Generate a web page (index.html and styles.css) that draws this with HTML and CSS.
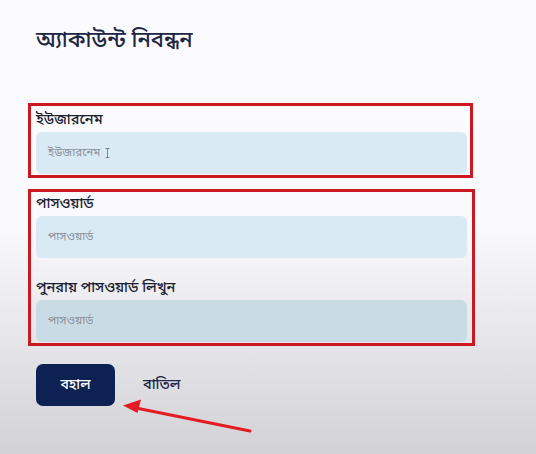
FILE: index.html
```html
<!DOCTYPE html>
<html lang="bn">
<head>
<meta charset="utf-8">
<title>অ্যাকাউন্ট নিবন্ধন</title>
<link rel="stylesheet" href="styles.css">
</head>
<body>
<main class="page">
  <h1 class="title">অ্যাকাউন্ট নিবন্ধন</h1>
  <form class="form">
    <div class="group group-user">
      <div class="field">
        <label class="label">ইউজারনেম</label>
        <div class="input"><span class="ph">ইউজারনেম</span><svg class="ibeam" width="5" height="10" viewBox="0 0 5 10"><path d="M0.5 0.5h4M0.5 9.5h4M2.5 0.5v9" stroke="#7d828c" stroke-width="1" fill="none"/></svg></div>
      </div>
    </div>
    <div class="group group-pass">
      <div class="field">
        <label class="label">পাসওয়ার্ড</label>
        <div class="input"><span class="ph">পাসওয়ার্ড</span></div>
      </div>
      <div class="field">
        <label class="label">পুনরায় পাসওয়ার্ড লিখুন</label>
        <div class="input input-dim"><span class="ph">পাসওয়ার্ড</span></div>
      </div>
    </div>
    <div class="actions">
      <button type="button" class="btn-primary">বহাল</button>
      <button type="button" class="btn-link">বাতিল</button>
    </div>
  </form>
  <svg class="arrow" width="536" height="454" viewBox="0 0 536 454">
    <line x1="250" y1="431" x2="136" y2="408" stroke="#e21c22" stroke-width="3" stroke-linecap="round"/>
    <polygon points="123,405.5 141,399.5 137.5,413" fill="#e21c22"/>
  </svg>
</main>
</body>
</html>
```
FILE: styles.css
```css
html, body {
  margin: 0;
  padding: 0;
}
body {
  width: 536px;
  height: 454px;
  overflow: hidden;
  font-family: "Noto Sans Bengali", "Noto Sans", "Lato", sans-serif;
  background: linear-gradient(180deg, #fbfbfd 0%, #faf9fc 50%, #efeef2 63%, #e2e1e5 80%, #d2d1d6 100%);
  color: #1b2030;
}
.page {
  position: relative;
  height: 454px;
  padding: 26px 0 0 36px;
  box-sizing: border-box;
}
.title {
  margin: 0;
  font-size: 22px;
  font-weight: 500;
  line-height: 32px;
  color: #1d2644;
}
.form {
  width: 431px;
  margin-top: 52px;
  display: flex;
  flex-direction: column;
}
.group {
  position: relative;
  display: flex;
  flex-direction: column;
  gap: 20px;
}
.group::before {
  content: "";
  position: absolute;
  border: 3px solid #cc1820;
  pointer-events: none;
}
.group-user::before {
  top: -7px;
  bottom: -4px;
  left: -8px;
  right: -6px;
}
.group-pass {
  margin-top: 20px;
}
.group-pass::before {
  top: -5px;
  bottom: -4px;
  left: -8px;
  right: -8px;
}
.field {
  display: flex;
  flex-direction: column;
}
.label {
  font-size: 14.5px;
  font-weight: 500;
  line-height: 22px;
  color: #1b2030;
}
.input {
  height: 42px;
  border-radius: 6px;
  background: #d9eaf5;
  display: flex;
  align-items: center;
  gap: 5px;
  padding-left: 12px;
  box-sizing: border-box;
}
.input-dim {
  background: #c9dce6;
}
.ph {
  font-size: 11.5px;
  color: #8b909a;
}
.actions {
  margin-top: 22px;
  display: flex;
  align-items: center;
  gap: 28px;
}
.btn-primary {
  width: 79px;
  height: 42px;
  border: none;
  border-radius: 7px;
  background: #0d2152;
  color: #ffffff;
  font-family: inherit;
  font-size: 14px;
  font-weight: 500;
}
.btn-link {
  border: none;
  background: none;
  padding: 0;
  font-family: inherit;
  font-size: 14.5px;
  font-weight: 500;
  color: #1d2644;
}
.arrow {
  position: absolute;
  left: 0;
  top: 0;
  pointer-events: none;
}
```
